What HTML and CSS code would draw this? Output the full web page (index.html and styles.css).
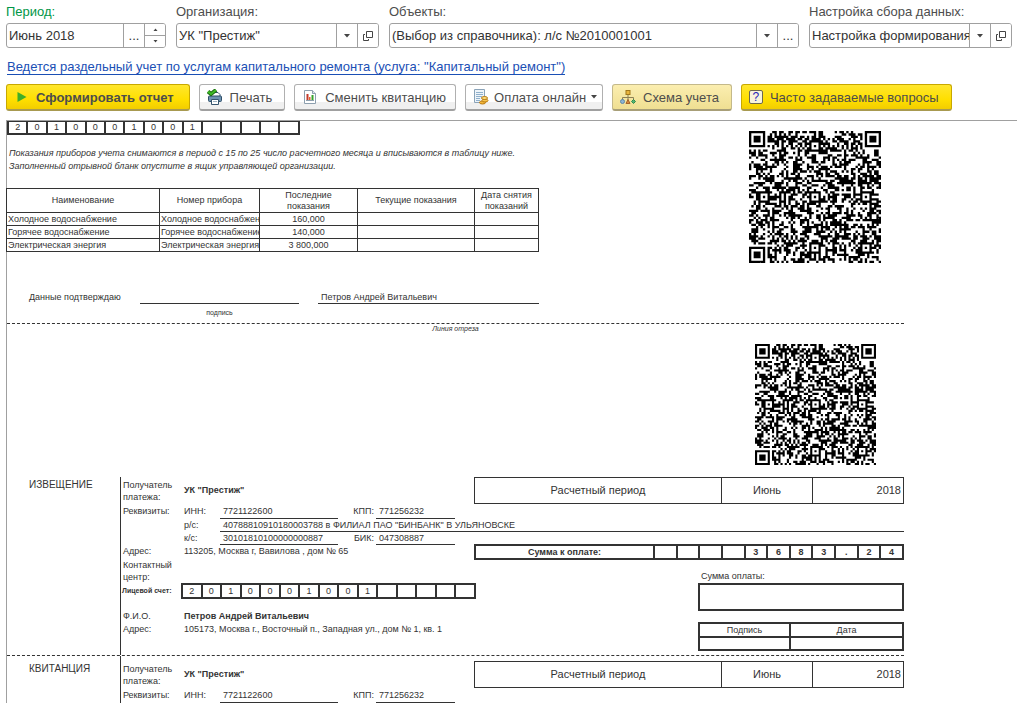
FILE: index.html
```html
<!DOCTYPE html>
<html lang="ru">

<head>
    <meta charset="UTF-8">
    <meta name="viewport" content="width=device-width, initial-scale=1.0">
    <title>Квитанция</title>
    <link rel="stylesheet" href="styles.css">
</head>

<body>
    <form class="filters">
        <div class="field">
            <label class="green" for="period">Период:</label>
            <div class="control">
                <input type="text" id="period" value="Июнь 2018">
                <button type="button" aria-label="Выбрать период">...</button>
                <div class="spinner">
                    <button type="button" aria-label="Больше"><svg width="5" height="3" viewBox="0 0 5 3"><path d="M0.5 3L2.5 0.5L4.5 3z"/></svg></button>
                    <button type="button" aria-label="Меньше"><svg width="5" height="3" viewBox="0 0 5 3"><path d="M0.5 0L2.5 2.5L4.5 0z"/></svg></button>
                </div>
            </div>
        </div>
        <div class="field">
            <label for="org">Организация:</label>
            <div class="control">
                <input type="text" id="org" value='УК "Престиж"'>
                <button type="button" aria-label="Список"><svg width="6" height="4" viewBox="0 0 6 4"><path d="M0 0h6L3 3.5z"/></svg></button>
                <button type="button" aria-label="Открыть"><svg class="line" width="10" height="10" viewBox="0 0 10 10"><path d="M3.5 0.5h6v6h-6zM2 3.5H0.5v6h5V8"/></svg></button>
            </div>
        </div>
        <div class="field wide">
            <label for="objects">Объекты:</label>
            <div class="control">
                <input type="text" id="objects" value="(Выбор из справочника): л/с №2010001001">
                <button type="button" aria-label="Список"><svg width="6" height="4" viewBox="0 0 6 4"><path d="M0 0h6L3 3.5z"/></svg></button>
                <button type="button" aria-label="Выбрать объекты">...</button>
            </div>
        </div>
        <div class="field">
            <label for="setup">Настройка сбора данных:</label>
            <div class="control">
                <input type="text" id="setup" value="Настройка формирования">
                <button type="button" aria-label="Список"><svg width="6" height="4" viewBox="0 0 6 4"><path d="M0 0h6L3 3.5z"/></svg></button>
                <button type="button" aria-label="Открыть"><svg class="line" width="10" height="10" viewBox="0 0 10 10"><path d="M3.5 0.5h6v6h-6zM2 3.5H0.5v6h5V8"/></svg></button>
            </div>
        </div>
    </form>

    <a class="info" href="#">Ведется раздельный учет по услугам капитального ремонта (услуга: "Капитальный ремонт")</a>

    <div class="toolbar">
        <button class="btn yellow main" type="button">
            <svg width="10" height="10" viewBox="0 0 10 10"><path fill="#3fae29" d="M0.5 0L9.5 5L0.5 10z"/></svg>
            Сформировать отчет
        </button>
        <button class="btn" type="button">
            <svg width="16" height="16" viewBox="0 0 16 16">
                <path fill="#fff" stroke="#36556f" d="M4.5 7V3.500h6.500l2 2V7"/>
                <rect x="1.500" y="7" width="13" height="5.500" rx="1" fill="#6d92b0" stroke="#2f4f69"/>
                <path fill="#fff" stroke="#36556f" d="M4.500 10.500h7v5h-7z"/>
                <path stroke="#9fb4c4" d="M6 12.500h4"/>
                <path fill="none" stroke="#1c6b12" stroke-width="4" d="M1 2.500L4 5L9 1"/>
                <path fill="none" stroke="#3dbb25" stroke-width="2" d="M1 2.500L4 5L9 1"/>
            </svg>
            Печать
        </button>
        <button class="btn tight" type="button">
            <svg width="16" height="16" viewBox="0 0 16 16">
                <path fill="#fff" stroke="#8d9fae" d="M2.500 1.500h8l3 3v10h-11z"/>
                <path fill="#dce5ec" stroke="#8d9fae" d="M10.500 1.500v3h3"/>
                <path fill="#c33a2c" d="M4.500 5h2v6h-2z"/>
                <path fill="#e2622c" d="M7 8h1.500v3H7z"/>
                <path fill="#36a52e" d="M9.500 6h2v5h-2z"/>
                <path stroke="#8d9fae" d="M4 11.500h8"/>
            </svg>
            Сменить квитанцию
        </button>
        <button class="btn drop" type="button">
            <svg width="16" height="16" viewBox="0 0 16 16">
                <path fill="#eef4f9" stroke="#8aa3b8" d="M1.500 0.500h10v13h-10z"/>
                <path stroke="#8fb0cc" d="M3 3.500h7M3 5.500h7M3 7.500h6M3 9.500h4M3 11.500h4"/>
                <ellipse cx="9.500" cy="13.500" rx="3" ry="1.500" fill="#f4b83a" stroke="#b87a12"/>
                <ellipse cx="12" cy="11.500" rx="3" ry="1.500" fill="#f7c650" stroke="#b87a12"/>
                <ellipse cx="11.500" cy="9" rx="3" ry="1.500" fill="#fbdc7c" stroke="#b87a12"/>
            </svg>
            Оплата онлайн
            <svg class="arrow" width="6" height="4" viewBox="0 0 6 4"><path d="M0 0h6L3 3.5z"/></svg>
        </button>
        <button class="btn pale" type="button">
            <svg width="16" height="16" viewBox="0 0 16 16">
                <path fill="none" stroke="#8d8055" d="M8 5v8M2.500 11V8.500h11V11"/>
                <rect x="6" y="1.500" width="4" height="4" fill="#e9b53b" stroke="#a2781b"/>
                <circle cx="2.500" cy="12.500" r="2" fill="#8db4d2" stroke="#5d88a9"/>
                <path fill="#d98a3c" stroke="#a8662a" d="M8 10.500l2 4H6z"/>
                <path fill="#55b473" stroke="#2f8a4c" d="M13.500 10.500l2 2l-2 2l-2-2z"/>
            </svg>
            Схема учета
        </button>
        <button class="btn yellow" type="button">
            <span class="question">?</span>
            Часто задаваемые вопросы
        </button>
    </div>

    <main class="report">
        <div class="sheet">
            <section class="meters">
                <div class="meters-left">
                    <table class="digits flush">
                        <tr><td>2</td><td>0</td><td>1</td><td>0</td><td>0</td><td>0</td><td>1</td><td>0</td><td>0</td><td>1</td><td></td><td></td><td></td><td></td><td></td></tr>
                    </table>
                    <p class="note">Показания приборов учета снимаются в период с 15 по 25 число расчетного месяца и вписываются в таблицу ниже.<br>Заполненный отрывной бланк опустите в ящик управляющей организации.</p>
                    <table class="readings">
                        <colgroup><col class="c-name"><col class="c-num"><col class="c-last"><col class="c-cur"><col class="c-date"></colgroup>
                        <tr><th>Наименование</th><th>Номер прибора</th><th>Последние показания</th><th>Текущие показания</th><th>Дата снятия показаний</th></tr>
                        <tr><td>Холодное водоснабжение</td><td>Холодное водоснабжение</td><td class="center">160,000</td><td></td><td></td></tr>
                        <tr><td>Горячее водоснабжение</td><td>Горячее водоснабжение</td><td class="center">140,000</td><td></td><td></td></tr>
                        <tr><td>Электрическая энергия</td><td>Электрическая энергия</td><td class="center">3 800,000</td><td></td><td></td></tr>
                    </table>
                    <div class="confirm">
                        <span class="confirm-text">Данные подтверждаю</span>
                        <span class="sign-line"></span>
                        <span class="sign-name">Петров Андрей Витальевич</span>
                        <small>подпись</small>
                    </div>
                </div>
                <svg class="qr" viewBox="0 0 57 57" role="img" aria-label="QR-код"></svg>
            </section>

            <div class="cut"><small>Линия отреза</small></div>

            <div class="qr-row"><svg class="qr small" viewBox="0 0 57 57" role="img" aria-label="QR-код"></svg></div>

            <section class="slip">
                <h2>ИЗВЕЩЕНИЕ</h2>
                <div class="slip-body">
                    <div class="head">
                        <span class="caption">Получатель платежа:</span>
                        <b>УК "Престиж"</b>
                        <table class="period">
                            <tr><td class="p-title">Расчетный период</td><td class="p-month">Июнь</td><td class="p-year">2018</td></tr>
                        </table>
                    </div>
                    <div class="req first">
                        <span class="caption">Реквизиты:</span><span class="key">ИНН:</span><span class="val">7721122600</span>
                        <span class="key right">КПП:</span><span class="val short">771256232</span>
                    </div>
                    <div class="req">
                        <span class="caption"></span><span class="key">р/с:</span><span class="val full">40788810910180003788 в ФИЛИАЛ ПАО "БИНБАНК" В УЛЬЯНОВСКЕ</span>
                    </div>
                    <div class="req">
                        <span class="caption"></span><span class="key">к/с:</span><span class="val">30101810100000000887</span>
                        <span class="key right">БИК:</span><span class="val short">047308887</span>
                    </div>
                    <div class="bottom">
                        <div class="payer">
                            <span>Адрес:</span><span>113205, Москва г, Вавилова , дом № 65</span>
                            <span class="contact">Контактный центр:</span><span></span>
                            <b class="tiny">Лицевой счет:</b>
                            <table class="digits">
                                <tr><td>2</td><td>0</td><td>1</td><td>0</td><td>0</td><td>0</td><td>1</td><td>0</td><td>0</td><td>1</td><td></td><td></td><td></td><td></td><td></td></tr>
                            </table>
                            <span class="fio">Ф.И.О.</span><b class="fio">Петров Андрей Витальевич</b>
                            <span>Адрес:</span><span>105173, Москва г., Восточный п., Западная ул., дом № 1, кв. 1</span>
                        </div>
                        <div class="pay">
                            <table class="digits sum">
                                <tr><th>Сумма к оплате:</th><td></td><td></td><td></td><td></td><td>3</td><td>6</td><td>8</td><td>3</td><td>.</td><td>2</td><td>4</td></tr>
                            </table>
                            <div class="paid">
                                <span>Сумма оплаты:</span>
                                <div class="paid-box"></div>
                                <table class="digits signs">
                                    <tr><td class="s-sign">Подпись</td><td>Дата</td></tr>
                                    <tr><td></td><td></td></tr>
                                </table>
                            </div>
                        </div>
                    </div>
                </div>
            </section>

            <div class="cut plain"></div>

            <section class="slip next">
                <h2>КВИТАНЦИЯ</h2>
                <div class="slip-body">
                    <div class="head">
                        <span class="caption">Получатель платежа:</span>
                        <b>УК "Престиж"</b>
                        <table class="period">
                            <tr><td class="p-title">Расчетный период</td><td class="p-month">Июнь</td><td class="p-year">2018</td></tr>
                        </table>
                    </div>
                    <div class="req first">
                        <span class="caption">Реквизиты:</span><span class="key">ИНН:</span><span class="val">7721122600</span>
                        <span class="key right">КПП:</span><span class="val short">771256232</span>
                    </div>
                </div>
            </section>
        </div>
    </main>

    <script src="script.js"></script>
</body>

</html>
```

FILE: styles.css
```css
* {
    box-sizing: border-box;
}

body {
    font-family: "Liberation Sans", Arial, sans-serif;
    font-size: 13px;
    margin: 0;
    color: #333;
    background-color: white;
}

input,
button {
    font: inherit;
    color: inherit;
    margin: 0;
}

.filters {
    display: flex;
    gap: 10px;
    padding: 4px 5px 0 6px;
}

.field {
    flex: 0 0 203px;
    min-width: 0;
}

.field:first-child {
    flex-basis: 160px;
}

.field.wide {
    flex: 1 1 0;
}

.field label {
    display: block;
    line-height: 16px;
    margin-bottom: 3px;
    color: #4d4d4d;
    white-space: nowrap;
}

.field label.green {
    color: #009646;
}

.control {
    display: flex;
    height: 25px;
    border: 1px solid #a0a0a0;
    border-radius: 3px;
    overflow: hidden;
}

.control input {
    flex: 1;
    min-width: 0;
    border: none;
    padding: 0 0 0 2px;
    outline: none;
    background: none;
}

.control button {
    flex: 0 0 21px;
    display: flex;
    align-items: center;
    justify-content: center;
    padding: 0;
    border: none;
    border-left: 1px solid #a0a0a0;
    background: white;
    fill: #444;
}

.control .line {
    fill: none;
    stroke: #444;
}

.spinner {
    flex: 0 0 21px;
    display: flex;
    flex-direction: column;
    border-left: 1px solid #a0a0a0;
}

.spinner button {
    flex: 1;
    border-left: none;
}

.spinner button + button {
    border-top: 1px solid #a0a0a0;
}

.info {
    display: inline-block;
    margin: 11px 7px 0;
    line-height: 15px;
    color: #1a4fb5;
    border-bottom: 1px solid #1a4fb5;
    text-decoration: none;
}

.toolbar {
    display: flex;
    gap: 9px;
    padding: 9px 6px;
}

.btn {
    display: flex;
    align-items: center;
    gap: 7px;
    height: 27px;
    padding: 0 12px 0 7px;
    border: 1px solid #b0b0b0;
    border-bottom: 2px solid #a0a0a0;
    border-radius: 3px;
    background: linear-gradient(#fff 70%, #f0f0f0 70%);
    color: #4d4d4d;
    white-space: nowrap;
}

.btn.yellow {
    border-color: #c8a800 #c8a800 #a89a50;
    background: linear-gradient(#ffe62e, #ffdf00 60%, #f2cd00);
}

.btn.pale {
    border-color: #c4b98a #c4b98a #a89f78;
    background: linear-gradient(#fbeeb0, #efdf92);
}

.btn.main {
    gap: 9px;
    padding: 0 15px 0 10px;
    font-weight: bold;
}

.btn.tight {
    padding-right: 9px;
}

.btn.drop {
    gap: 5px;
    padding-right: 5px;
}

.arrow {
    fill: #444;
}

.question {
    width: 14px;
    height: 14px;
    border: 1px solid #6c6850;
    border-radius: 2px;
    background: #f8f4dc;
    color: #2525b8;
    font-size: 12px;
    line-height: 12px;
    text-align: center;
}

.report {
    margin-left: 6px;
    border-left: 1px solid #a0a0a0;
    border-top: 1px solid #a0a0a0;
    font-size: 9px;
    line-height: 13px;
}

.sheet {
    max-width: 897px;
}

.meters {
    display: flex;
    justify-content: space-between;
    align-items: flex-start;
    padding-right: 23px;
}

.meters-left {
    flex: 0 1 532px;
}

.qr {
    width: 132px;
    height: 132px;
    margin-top: 10px;
}

.qr.small {
    width: 121px;
    height: 121px;
    margin: 0;
}

.qr-row {
    display: flex;
    justify-content: flex-end;
    padding: 11px 28px 12px 0;
}

table {
    border-collapse: collapse;
    table-layout: fixed;
}

td,
th {
    padding: 0;
    font-weight: normal;
}

.digits {
    width: 295px;
    text-align: center;
    line-height: 12px;
}

.digits td,
.digits th {
    height: 13px;
    border: 2px solid #333;
}

.digits.flush {
    width: 293px;
    line-height: 11px;
}

.digits.flush td {
    height: 12px;
    border-top-width: 1px;
}

.note {
    margin: 12px 2px 15px;
    font-style: italic;
}

.readings {
    width: 100%;
    margin-left: -1px;
    line-height: 12px;
}

.readings td,
.readings th {
    border: 1px solid #333;
    height: 13px;
    padding: 0 1px;
    overflow: hidden;
    white-space: nowrap;
}

.readings th {
    height: 24px;
    padding: 0 5px;
    white-space: normal;
    line-height: 11px;
}

.readings .center {
    text-align: center;
}

.c-name { width: 153px; }
.c-num { width: 100px; }
.c-last { width: 98px; }
.c-cur { width: 117px; }
.c-date { width: 64px; }

.confirm {
    display: grid;
    grid-template-columns: 114px 159px 1fr;
    column-gap: 19px;
    padding-top: 39px;
    line-height: 12px;
}

.confirm-text {
    padding-left: 22px;
    margin-right: -19px;
}

.sign-line,
.sign-name {
    border-bottom: 1px solid #333;
}

.sign-name {
    padding-left: 3px;
}

small {
    font-size: 7px;
    line-height: 9px;
}

.confirm small {
    grid-column: 2;
    margin: 4px 0 6px;
    text-align: center;
}

.cut {
    border-top: 1px dashed #333;
    text-align: center;
    font-style: italic;
    line-height: 9px;
    display: flow-root;
}

.slip {
    display: grid;
    grid-template-columns: 113px minmax(0, 1fr);
}

.slip h2 {
    margin: 0;
    padding: 1px 0 0 22px;
    font-size: 10px;
    font-weight: normal;
}

.slip-body {
    border-left: 1px solid #333;
}

.next h2 {
    padding-top: 6px;
}

.next .slip-body {
    padding-top: 5px;
}

.head {
    display: flex;
    height: 27px;
}

.caption {
    flex: 0 0 63px;
    padding-left: 2px;
}

.head .caption {
    line-height: 12px;
    padding-top: 2px;
}

.head b {
    align-self: center;
}

.period {
    margin-left: auto;
    flex: 0 1 430px;
    font-size: 11px;
    text-align: center;
}

.period td {
    border: 1px solid #333;
}

.p-title { width: 247px; }
.p-month { width: 91px; }

.period .p-year {
    padding-right: 2px;
    text-align: right;
}

.req {
    display: flex;
}

.req.first {
    line-height: 14px;
}

.req:not(.first) {
    line-height: 12px;
}

.key {
    flex: 0 0 36px;
}

.key.right {
    text-align: right;
    padding-right: 2px;
    flex-basis: 38px;
}

.val {
    flex: 0 0 118px;
    padding-left: 3px;
    border-bottom: 1px solid #333;
}

.val.short {
    flex-basis: 79px;
    padding-left: 3px;
}

.val.full {
    flex: 1;
}

.bottom {
    display: flex;
    justify-content: space-between;
    margin-top: -1px;
}

.payer {
    flex: 1;
    min-width: 0;
    display: grid;
    grid-template-columns: 61px minmax(0, 1fr);
    align-content: start;
    padding: 1px 0 0 2px;
    white-space: nowrap;
}

.payer .contact {
    line-height: 12px;
    white-space: normal;
    padding: 1px 0 0;
}

.payer .digits {
    margin-left: -3px;
}

.payer .fio {
    padding-top: 11px;
}

.tiny {
    font-size: 7px;
    line-height: 15px;
    margin-left: -1px;
}

.pay {
    flex: 0 0 430px;
    padding-bottom: 4px;
}

.sum {
    width: 100%;
}

.sum th,
.sum td {
    font-weight: bold;
}

.sum th {
    width: 179px;
}

.paid {
    width: 206px;
    margin: 10px 0 0 auto;
}

.paid span {
    padding-left: 3px;
}

.paid-box {
    height: 28px;
    margin-bottom: 11px;
    border: 2px solid #333;
}

.signs {
    width: 100%;
}

.s-sign {
    width: 91px;
}
```

FILE: script.js
```js
const SIZE = 57;
const ALIGN = [6, 28, 50];

function ring(dx, dy) {
    return Math.max(Math.abs(dx), Math.abs(dy));
}

// returns true/false for service patterns, null for data modules
function servicePattern(x, y) {
    for (const [cx, cy] of [[3, 3], [SIZE - 4, 3], [3, SIZE - 4]]) {
        const r = ring(x - cx, y - cy);
        if (r <= 4) return r !== 2 && r !== 4;
    }
    for (const cx of ALIGN) {
        for (const cy of ALIGN) {
            const corner = (cx === 6 && cy !== 28) || (cy === 6 && cx === 50);
            const r = ring(x - cx, y - cy);
            if (!corner && r <= 2) return r !== 1;
        }
    }
    if (x === 6 || y === 6) return (x + y) % 2 === 0;
    return null;
}

function drawQr(svg) {
    let seed = 2010001;
    let d = '';
    for (let y = 0; y < SIZE; y++) {
        for (let x = 0; x < SIZE; x++) {
            seed ^= seed << 13;
            seed ^= seed >>> 17;
            seed ^= seed << 5;
            const fixed = servicePattern(x, y);
            const dark = fixed === null ? (seed >>> 0) / 4294967296 < 0.5 : fixed;
            if (dark) d += `M${x} ${y}h1v1h-1z`;
        }
    }
    const path = document.createElementNS('http://www.w3.org/2000/svg', 'path');
    path.setAttribute('d', d);
    svg.appendChild(path);
}

document.querySelectorAll('.qr').forEach(drawQr);
```
